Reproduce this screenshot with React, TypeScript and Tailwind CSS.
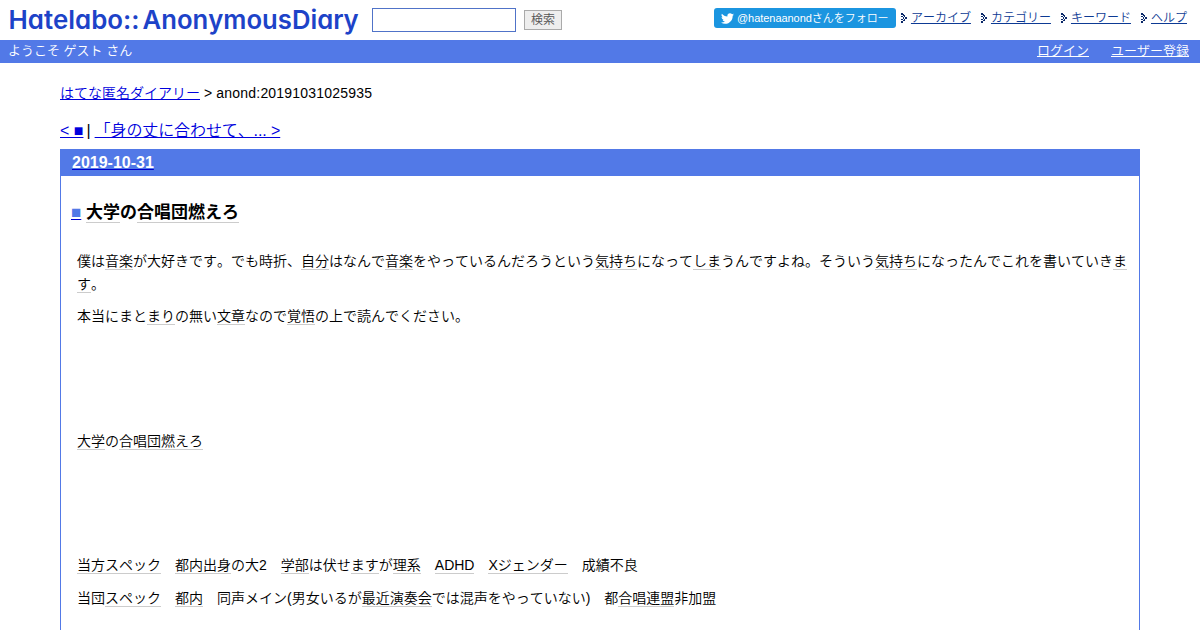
import type { ReactNode } from 'react';

const menu = ['アーカイブ', 'カテゴリー', 'キーワード', 'ヘルプ'];

// dots of the little arrow in front of each menu item
const arrowDots = [
  [0, 0], [1, 0], [0, 1], [1, 1], [2, 2], [3, 2], [2, 1], [0, 3], [1, 3], [3, 3], [4, 4], [5, 4],
  [2, 4], [4, 5], [5, 5], [2, 5], [0, 6], [1, 6], [3, 6], [2, 7], [3, 7], [0, 8], [1, 8], [0, 9], [1, 9],
];

function Arrow() {
  return (
    <svg width="6" height="10" viewBox="0 0 6 10" fill="#0b2a6a" shapeRendering="crispEdges">
      {arrowDots.map(([x, y]) => (
        <rect key={`${x}-${y}`} x={x} y={y} width="1" height="1" />
      ))}
    </svg>
  );
}

function TwitterBird() {
  return (
    <svg width="13" height="13" viewBox="0 0 24 24" fill="#fff">
      <path d="M23.953 4.57a10 10 0 01-2.825.775 4.958 4.958 0 002.163-2.723c-.951.555-2.005.959-3.127 1.184a4.92 4.92 0 00-8.384 4.482C7.69 8.095 4.067 6.13 1.64 3.162a4.822 4.822 0 00-.666 2.475c0 1.71.87 3.213 2.188 4.096a4.904 4.904 0 01-2.228-.616v.06a4.923 4.923 0 003.946 4.827 4.996 4.996 0 01-2.212.085 4.936 4.936 0 004.604 3.417 9.867 9.867 0 01-6.102 2.105c-.39 0-.779-.023-1.17-.067a13.995 13.995 0 007.557 2.209c9.053 0 13.998-7.496 13.998-13.985 0-.21 0-.42-.015-.63A9.935 9.935 0 0024 4.59z" />
    </svg>
  );
}

function Logo() {
  return (
    <svg
      width="352"
      height="38"
      viewBox="0 0 352 38"
      fill="#1d43c8"
      className="overflow-visible font-['Inter',sans-serif] text-[26px] font-semibold [font-feature-settings:'cv11']"
    >
      <text x="0.5" y="29" textLength="131" lengthAdjust="spacingAndGlyphs">Hatelabo::</text>
      <text x="134.5" y="29" textLength="216" lengthAdjust="spacingAndGlyphs">AnonymousDiary</text>
    </svg>
  );
}

function Kw({ children }: { children: ReactNode }) {
  return <a className="border-b border-[#ccc]">{children}</a>;
}

function Header() {
  return (
    <header>
      <div className="flex h-10 items-start pl-2">
        <Logo />
        <div className="ml-3 mt-2 h-6 w-36 border border-[#5073c8] bg-white" />
        <button className="ml-2 mt-2.5 h-5 w-[38px] border border-[#aaa] bg-[#eee] text-xs leading-[17px] text-[#555]">
          検索
        </button>
        <div className="ml-auto mt-2 flex items-center pr-[13px]">
          <a className="flex h-5 w-[182px] items-center whitespace-nowrap rounded-[3px] bg-[#1b95e0] pl-[7px] text-[11px] text-white">
            <TwitterBird />
            <span className="ml-[3px] tracking-[-0.04px]">@hatenaanondさんをフォロー</span>
          </a>
          <nav className="ml-[5px] flex gap-[10px]">
            {menu.map((item) => (
              <span key={item} className="flex items-center gap-1 text-xs leading-5">
                <Arrow />
                <a className="text-[#0d3a94] underline">{item}</a>
              </span>
            ))}
          </nav>
        </div>
      </div>
      <div className="flex h-[23px] justify-between bg-[#5279e7] pl-2 pr-[11px] text-[13px] leading-[22px] text-white">
        <span>ようこそ ゲスト さん</span>
        <div className="flex gap-[22px]">
          <a className="underline">ログイン</a>
          <a className="underline">ユーザー登録</a>
        </div>
      </div>
    </header>
  );
}

export default function App() {
  return (
    <div className="h-[630px] overflow-hidden bg-white font-['Liberation_Sans','Noto_Sans_CJK_JP',sans-serif] font-[350] text-black [font-kerning:none]">
      <Header />
      <main className="px-[60px]">
        <div className="pt-5 text-sm leading-5">
          <a className="text-[#0000dd] underline">はてな匿名ダイアリー</a>{' '}
          <span className="tracking-[0.2px]">&gt; anond:20191031025935</span>
        </div>
        <div className="mt-4 h-[30px] text-base leading-6">
          <a className="text-[#0000dd] underline">&lt; ■</a>
          <span className="mx-[3px]">|</span>
          <a className="ml-px tracking-[-0.1px] text-[#0000dd] underline">「身の丈に合わせて、... &gt;</a>
        </div>
        <article className="h-[500px] border border-[#5279e7]">
          <h2 className="h-[26px] bg-[#5279e7] pl-[11px] text-base font-bold leading-[26px] text-white">
            <a className="underline decoration-[#0000cc]">2019-10-31</a>
          </h2>
          <h3 className="mt-[25px] pl-2.5 text-[17px] font-bold leading-6">
            <a className="text-[#5279e7] underline decoration-[#0000cc]">■</a>{' '}
            <Kw>大学</Kw>の<Kw>合唱団燃えろ</Kw>
          </h3>
          <div className="mt-[25px] pl-4 pr-2.5 text-sm leading-[23px]">
            <p>
              僕は<Kw>音楽</Kw>が大好きです。でも時折、<Kw>自分</Kw>はなんで<Kw>音楽</Kw>をやっているんだろうという
              <Kw>気持ち</Kw>になって<Kw>しま</Kw>うんですよね。そういう<Kw>気持ち</Kw>
              になったんでこれを書いていき<Kw>ます</Kw>。
            </p>
            <p className="mt-[9px]">
              本当にまと<Kw>まり</Kw>の無い<Kw>文章</Kw>なので<Kw>覚悟</Kw>の上で読んでください。
            </p>
            <p className="mt-[102px]">
              <Kw>大学</Kw>の<Kw>合唱団燃えろ</Kw>
            </p>
            <p className="mt-[101px]">
              <Kw>当方</Kw><Kw>スペック</Kw>　<Kw>都内</Kw><Kw>出身</Kw>の大2　<Kw>学部</Kw>は伏せ<Kw>ます</Kw>が
              <Kw>理系</Kw>　<Kw>ADHD</Kw>　<Kw>Xジェンダー</Kw>　成績不良
            </p>
            <p className="mt-2.5">
              当団<Kw>スペック</Kw>　<Kw>都内</Kw>　同声メイン(男女いるが<Kw>最近</Kw><Kw>演奏会</Kw>
              では混声をやっていない)　都<Kw>合唱</Kw><Kw>連盟</Kw>非加盟
            </p>
          </div>
        </article>
      </main>
    </div>
  );
}
